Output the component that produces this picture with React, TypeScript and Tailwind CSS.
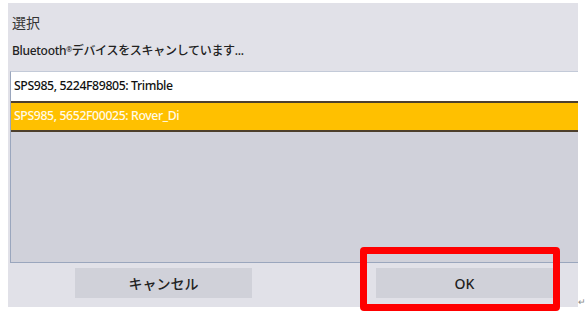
import React from "react";

export default function App() {
  return (
    <div
      className="relative w-[588px] h-[322px] bg-white overflow-hidden"
      style={{ fontFamily: '"Noto Sans", "Noto Sans CJK JP", sans-serif' }}
    >
      <div className="ml-[8px] mt-[3px] w-[570px] h-[304px] bg-[#e1e1e8] flex flex-col">
        <div className="pl-[4px] pt-[10px] h-[38px] text-[14px] leading-[20px] text-[#333]">選択</div>
        <div className="pl-[4px] h-[30px] text-[12px] leading-[20px] font-medium tracking-[-0.3px] text-[#222]">
          Bluetooth<sup className="text-[7px]">®</sup>デバイスをスキャンしています...
        </div>
        <div className="ml-[2px] h-[192px] bg-[#d0d1da] border-l border-t border-b border-l-[#9aa6bd] border-t-[#c3cad8] border-b-[#9aa6bd] flex flex-col">
          <div className="h-[29px] bg-white pl-[3px] flex items-center text-[12.3px] tracking-[-0.4px] font-medium text-[#111]">
            SPS985, 5224F89805: Trimble
          </div>
          <div className="h-[31px] bg-[#ffc000] border-y-2 border-[#4d3f2c] pl-[3px] flex items-center text-[12.3px] tracking-[-0.4px] font-medium text-[#fffbe8]">
            SPS985, 5652F00025: Rover_Di
          </div>
        </div>
        <div className="flex pl-[67px] pt-[5px] gap-[124px]">
          <div className="w-[177px] h-[30px] bg-[#d0d1d9] flex items-center justify-center text-[14px] font-medium text-[#222]">
            キャンセル
          </div>
          <div className="w-[177px] h-[30px] bg-[#d0d1d9] flex items-center justify-center text-[14px] font-medium text-[#222]">
            OK
          </div>
        </div>
      </div>
      <div className="absolute left-[360px] top-[247px] w-[200px] h-[64px] border-[7px] border-[#ff0000] rounded-[4px]" />
      <div className="absolute left-[578px] top-[296px] text-[9px] leading-[12px] text-[#888]">↵</div>
    </div>
  );
}
